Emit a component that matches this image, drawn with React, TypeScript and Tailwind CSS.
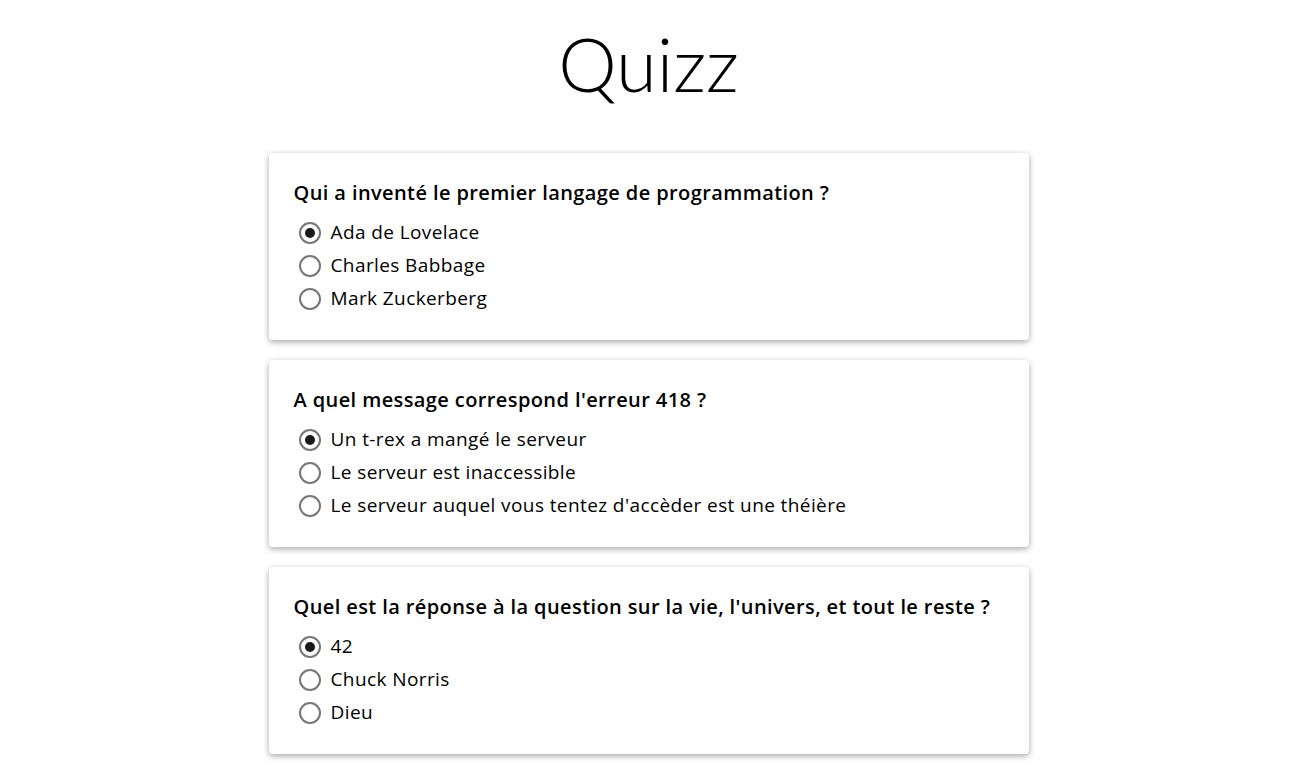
import { useState } from "react";

type Question = {
    id: number;
    titre: string;
    reponses: string[];
};

const questions: Question[] = [
    {
        id: 1,
        titre: "Qui a inventé le premier langage de programmation ?",
        reponses: ["Ada de Lovelace", "Charles Babbage", "Mark Zuckerberg"],
    },
    {
        id: 2,
        titre: "A quel message correspond l'erreur 418 ?",
        reponses: [
            "Un t-rex a mangé le serveur",
            "Le serveur est inaccessible",
            "Le serveur auquel vous tentez d'accèder est une théière",
        ],
    },
    {
        id: 3,
        titre: "Quel est la réponse à la question sur la vie, l'univers, et tout le reste ?",
        reponses: ["42", "Chuck Norris", "Dieu"],
    },
];

function CarteQuestion({ question }: { question: Question }) {
    const [choix, setChoix] = useState<number>(0);

    return (
        <div className="bg-white rounded-[4px] shadow-[0_2px_6px_rgba(0,0,0,0.35)] px-[25px] pt-[26px] pb-[25px]">
            <h2 className="text-[20px] leading-[28px] font-semibold text-black mb-[9px] tracking-[0.4px]">
                {question.titre}
            </h2>
            {question.reponses.map((reponse, index) => (
                <label
                    key={index}
                    className="flex items-center h-[33px] cursor-pointer"
                    onClick={() => setChoix(index)}
                >
                    <span className="ml-[5px] mr-[10px] w-[22px] h-[22px] rounded-full border-2 border-[#767676] flex items-center justify-center">
                        {choix === index && (
                            <span className="w-[10px] h-[10px] rounded-full bg-[#1a1a1a]"></span>
                        )}
                    </span>
                    <span className="text-[19px] text-black tracking-[0.4px]">{reponse}</span>
                </label>
            ))}
        </div>
    );
}

function App() {
    return (
        <div className="min-h-screen bg-white font-['Open_Sans',sans-serif]">
            <h1 className="font-['Lato',sans-serif] text-[74px] font-light leading-none text-center text-black pt-[27px] pb-[52px] pl-[2px]">
                Quizz
            </h1>
            <div className="w-[762px] mx-auto pl-[2px] flex flex-col gap-5 pb-5">
                {questions.map((question) => (
                    <CarteQuestion key={question.id} question={question} />
                ))}
            </div>
        </div>
    );
}

export default App;
